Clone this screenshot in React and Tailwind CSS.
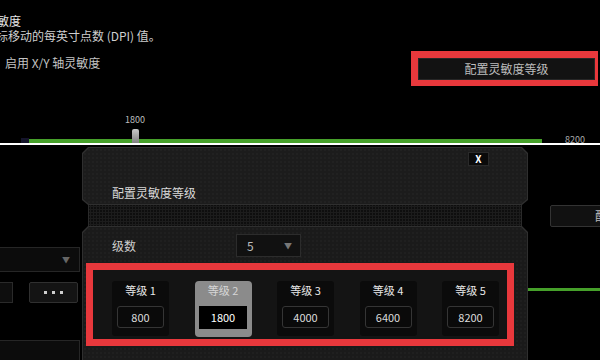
const HEADER_CLIP = "[clip-path:polygon(6px_0,calc(100%_-_6px)_0,100%_6px,100%_calc(100%_-_5px),calc(100%_-_6px)_100%,6px_100%,0_calc(100%_-_5px),0_6px)]";

function LevelCard({ n, value, selected }) {
  return (
    <div
      className={
        selected
          ? "w-[57px] h-[56px] rounded-[4px] bg-[#8b8b8b] flex flex-col items-center"
          : "w-[57px] h-[55px] rounded-[3px] bg-[#0b0b0b] flex flex-col items-center"
      }
    >
      <div
        className={
          selected
            ? "mt-[3px] text-[11px] leading-[12px] text-[#d6d6d6] whitespace-nowrap"
            : "mt-[3px] text-[11px] leading-[12px] text-[#e8e8e8] whitespace-nowrap"
        }
      >
        等级 {n}
      </div>
      <div
        className={
          selected
            ? "mt-[10px] w-[48px] h-[23px] bg-black flex items-center justify-center text-[11px] text-white"
            : "mt-[10px] w-[47px] h-[22px] rounded-[3px] border border-[#353535] bg-[#0a0a0a] flex items-center justify-center text-[11px] text-[#dcdcdc]"
        }
      >
        {value}
      </div>
    </div>
  );
}

export default function App() {
  const levels = [800, 1800, 4000, 6400, 8200];
  return (
    <div className="w-[600px] h-[360px] overflow-hidden bg-black font-['Noto_Sans_CJK_SC','Noto_Sans',sans-serif] flex flex-col">
      {/* top section */}
      <div className="h-[143px] flex flex-col overflow-hidden shrink-0">
        <div className="mt-[12.5px] -ml-[15px] text-[12px] leading-[15px] text-[#e6e6e6] whitespace-nowrap">灵敏度</div>
        <div className="-ml-[16px] text-[12px] leading-[15px] text-[#cfcfcf] whitespace-nowrap">鼠标移动的每英寸点数 (DPI) 值。</div>
        <div className="mt-[8px] h-[35px] flex items-start justify-between pl-[5px] pr-[2px]">
          <div className="mt-[4.5px] text-[12px] leading-[15px] text-[#c4c4c4] whitespace-nowrap">启用 X/Y 轴灵敏度</div>
          <div className="w-[187px] h-[35px] border-l-[7px] border-t-[7px] border-b-[6px] border-r-[3px] border-[#e8383c] flex">
            <div className="flex-1 bg-[#121212] border border-[#262626] flex items-center justify-center text-[12px] text-[#bdbdbd]">
              配置灵敏度等级
            </div>
          </div>
        </div>
        <div className="h-[58px] flex items-start">
          <div className="ml-[21px] mt-[52px] w-[8px] h-[6px] bg-[#14142a]" />
          <div className="relative mt-[53px] w-[513px] h-[4px] bg-[#46a02a]">
            <div className="absolute left-[91px] -top-[23px] w-[30px] text-center text-[9px] leading-[8px] text-[#bdbdbd]">1800</div>
            <div className="absolute left-[103px] -top-[10px] w-[7px] h-[15px] rounded-t-[2px] bg-gradient-to-b from-[#c8c8c8] to-[#7a7a7a]" />
          </div>
          <div className="ml-[23px] mt-[49px] text-[9px] leading-[9px] text-[#a8a8a8]">8200</div>
        </div>
      </div>

      <div className="h-[2px] bg-white shrink-0" />

      {/* bottom section */}
      <div className="flex-1 flex">
        {/* left panel */}
        <div className="w-[82px] shrink-0 flex flex-col overflow-hidden">
          <div className="mt-[102px] -ml-[2px] w-[82px] h-[25px] bg-[#0c0c0c] border border-[#262626] flex items-center justify-end pr-[9px]">
            <span className="text-[8px] text-[#666]">▼</span>
          </div>
          <div className="mt-[10px] h-[21px] flex">
            <div className="-ml-[2px] w-[15px] h-[21px] bg-[#0e0e0e] border border-[#2a2a2a]" />
            <div className="ml-[16px] w-[49px] h-[21px] bg-[#141414] border border-[#303030] rounded-[2px] flex items-center justify-center gap-[5px]">
              <div className="w-[3px] h-[3px] bg-[#cfcfcf]" />
              <div className="w-[3px] h-[3px] bg-[#cfcfcf]" />
              <div className="w-[3px] h-[3px] bg-[#cfcfcf]" />
            </div>
          </div>
          <div className="mt-[37px] -ml-[2px] w-[82px] h-[30px] bg-[#0c0c0c] border border-[#262626]" />
        </div>

        {/* dialog */}
        <div className="w-[446px] shrink-0 flex flex-col pt-[2px]">
          <div className={"h-[58px] bg-[#2f2f2f] p-[1px] " + HEADER_CLIP}>
            <div className={"h-full flex flex-col bg-[#1c1c1c] bg-[radial-gradient(circle,#212121_1px,transparent_1.5px)] bg-[length:4px_4px] " + HEADER_CLIP}>
              <div className="flex justify-end pr-[38px] mt-[4px]">
                <div className="w-[21px] h-[14px] bg-[#0a0a0a] border border-[#2a2a2a] flex items-center justify-center text-[10px] font-bold text-white leading-none">X</div>
              </div>
              <div className="mt-[18.5px] pl-[29px] text-[12px] leading-[16px] text-[#d8d8d8]">配置灵敏度等级</div>
            </div>
          </div>
          <div className="mx-[6px] h-[21px] bg-[#0c0c0c] bg-[radial-gradient(circle,#1c1c1c_1px,transparent_1.5px)] bg-[length:3px_3px] border-x border-[#2a2a2a]" />
          <div className="flex-1 bg-[#2f2f2f] p-[1px] pb-0 [clip-path:polygon(6px_0,calc(100%_-_6px)_0,100%_6px,100%_100%,0_100%,0_6px)]">
            <div className="h-full bg-[#1a1a1a] bg-[radial-gradient(circle,#1f1f1f_1px,transparent_1.5px)] bg-[length:4px_4px] flex flex-col [clip-path:polygon(6px_0,calc(100%_-_6px)_0,100%_6px,100%_100%,0_100%,0_6px)]">
              <div className="mt-[7px] h-[23px] flex items-center pl-[29px]">
                <div className="w-[124px] text-[12px] text-[#cfcfcf]">级数</div>
                <div className="w-[65px] h-[23px] bg-[#111] border border-[#2c2c2c] flex items-center justify-between pl-[10px] pr-[8px]">
                  <span className="text-[12px] text-[#bdbdbd]">5</span>
                  <span className="text-[8px] text-[#777]">▼</span>
                </div>
              </div>
              <div className="mt-[6px] ml-[3px] w-[428px] h-[83px] border-[7px] border-[#e8383c] bg-[#141414] pl-[19px] pt-[11px] flex items-start gap-[25.5px]">
                {levels.map((v, i) => (
                  <LevelCard key={i} n={i + 1} value={v} selected={i === 1} />
                ))}
              </div>
            </div>
          </div>
        </div>

        {/* right panel */}
        <div className="flex-1 flex flex-col overflow-hidden">
          <div className="mt-[60px] ml-[22px] w-[120px] h-[22px] bg-[#111] border border-[#333] rounded-[2px] flex items-center pl-[44px] text-[12px] text-[#bdbdbd] whitespace-nowrap">
            配置灵敏度等级
          </div>
          <div className="mt-[61px] h-[3px] bg-[#46a02a]" />
        </div>
      </div>
    </div>
  );
}
